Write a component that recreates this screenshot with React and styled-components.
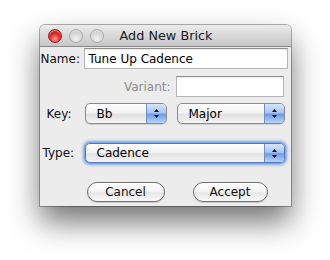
import styled, { createGlobalStyle } from 'styled-components';

const Global = createGlobalStyle`
  html, body {
    margin: 0;
    padding: 0;
    background: #fff;
    font-family: "DejaVu Sans", sans-serif;
  }
`;

const Page = styled.div`
  width: 330px;
  height: 260px;
  display: flex;
  justify-content: center;
  padding-top: 25px;
  box-sizing: border-box;
`;

const Window = styled.div`
  width: 251px;
  height: 181px;
  display: flex;
  flex-direction: column;
  border-radius: 5px 5px 0 0;
  background: #ececec;
  box-shadow: 0 0 0 1px rgba(0, 0, 0, 0.3), 0 16px 30px rgba(0, 0, 0, 0.55);
  overflow: hidden;
`;

const TitleBar = styled.div`
  height: 21px;
  display: flex;
  align-items: center;
  position: relative;
  padding-left: 8px;
  gap: 7px;
  background: linear-gradient(#ebebeb, #c6c6c6);
  border-bottom: 1px solid #8a8a8a;
`;

const Light = styled.span`
  width: 14px;
  height: 14px;
  border-radius: 50%;
  box-sizing: border-box;
  border: 1px solid ${(p) => (p.red ? '#9b1b1b' : '#a8a8a8')};
  background: ${(p) =>
    p.red
      ? 'radial-gradient(circle at 50% 75%, #ff9a9a 0%, #e0302d 45%, #a10e0e 100%)'
      : 'radial-gradient(circle at 50% 75%, #f2f2f2 0%, #d6d6d6 55%, #b8b8b8 100%)'};
  box-shadow: inset 0 1px 1px rgba(255, 255, 255, 0.6);
`;

const Title = styled.div`
  position: absolute;
  left: 0;
  right: 0;
  text-align: center;
  font-size: 12.8px;
  color: #1a1a1a;
  padding-left: 2px;
  pointer-events: none;
`;

const Body = styled.div`
  flex: 1;
  display: flex;
  flex-direction: column;
  padding-top: 1px;
`;

const Row = styled.div`
  display: flex;
  align-items: center;
  height: ${(p) => p.h || 21}px;
  margin-top: ${(p) => p.mt || 0}px;
  padding-left: ${(p) => p.indent || 0}px;
  gap: ${(p) => p.gap || 0}px;
`;

const Label = styled.span`
  font-size: 12px;
  color: ${(p) => (p.dim ? '#8c8c8c' : '#111')};
  width: ${(p) => p.w}px;
  text-align: ${(p) => p.align || 'left'};
  flex: none;
`;

const Field = styled.div`
  width: ${(p) => p.w}px;
  height: 21px;
  box-sizing: border-box;
  background: #fff;
  border: 1px solid #b5b5b5;
  border-top-color: #8e8e8e;
  box-shadow: inset 0 1px 1px rgba(0, 0, 0, 0.08);
  font-size: 12px;
  color: #000;
  display: flex;
  align-items: center;
  padding-left: 4px;
  flex: none;
`;

const Select = styled.div`
  width: ${(p) => p.w}px;
  height: ${(p) => p.h || 21}px;
  box-sizing: border-box;
  border: 1px solid #8b8b8b;
  border-radius: 5px;
  background: linear-gradient(#ffffff 0%, #f3f3f3 45%, #e2e2e2 55%, #f4f4f4 100%);
  display: flex;
  align-items: center;
  overflow: hidden;
  flex: none;
  box-shadow: ${(p) =>
    p.focus ? '0 0 0 1px #7fa6e6, 0 0 3px 2px rgba(90, 140, 225, 0.75)' : '0 1px 1px rgba(0,0,0,0.12)'};
  border-color: ${(p) => (p.focus ? '#5778b8' : '#8b8b8b')};
`;

const SelectText = styled.span`
  flex: 1;
  font-size: 12px;
  color: #000;
  padding-left: ${(p) => p.pad || 11}px;
`;

const Stepper = styled.span`
  width: 19px;
  align-self: stretch;
  border-left: 1px solid #6f8fc6;
  background: linear-gradient(#d6e6fb 0%, #a7c7f2 45%, #6f9fe4 55%, #b7d3f8 100%);
  display: flex;
  align-items: center;
  justify-content: center;
`;

const Button = styled.div`
  width: ${(p) => p.w}px;
  height: 20px;
  box-sizing: border-box;
  border: 1px solid #6f6f6f;
  border-radius: 10px;
  background: linear-gradient(#ffffff 0%, #f5f5f5 45%, #e6e6e6 55%, #fafafa 100%);
  box-shadow: 0 1px 1px rgba(0, 0, 0, 0.15);
  font-size: 12px;
  color: #111;
  display: flex;
  align-items: center;
  justify-content: center;
  flex: none;
`;

const Arrows = () => (
  <svg width="7" height="11" viewBox="0 0 7 11">
    <path d="M3.5 1 L6 4 L1 4 Z" fill="#111" />
    <path d="M3.5 10 L6 7 L1 7 Z" fill="#111" />
  </svg>
);

export default function App() {
  return (
    <>
      <Global />
      <Page>
        <Window>
          <TitleBar>
            <Light red />
            <Light />
            <Light />
            <Title>Add New Brick</Title>
          </TitleBar>
          <Body>
            <Row indent={1} gap={4}>
              <Label w={39}>Name:</Label>
              <Field w={204}>Tune Up Cadence</Field>
            </Row>
            <Row mt={7} gap={5}>
              <Label w={131} align="right" dim>
                Variant:
              </Label>
              <Field w={108} />
            </Row>
            <Row mt={6} indent={7} gap={10}>
              <Label w={28}>Key:</Label>
              <Select w={82}>
                <SelectText>Bb</SelectText>
                <Stepper>
                  <Arrows />
                </Stepper>
              </Select>
              <Select w={108}>
                <SelectText>Major</SelectText>
                <Stepper>
                  <Arrows />
                </Stepper>
              </Select>
            </Row>
            <Row mt={19} h={20} indent={3} gap={8}>
              <Label w={34}>Type:</Label>
              <Select w={200} h={20} focus>
                <SelectText>Cadence</SelectText>
                <Stepper>
                  <Arrows />
                </Stepper>
              </Select>
            </Row>
            <Row mt={19} h={20} indent={47} gap={28}>
              <Button w={78}>Cancel</Button>
              <Button w={75}>Accept</Button>
            </Row>
          </Body>
        </Window>
      </Page>
    </>
  );
}
